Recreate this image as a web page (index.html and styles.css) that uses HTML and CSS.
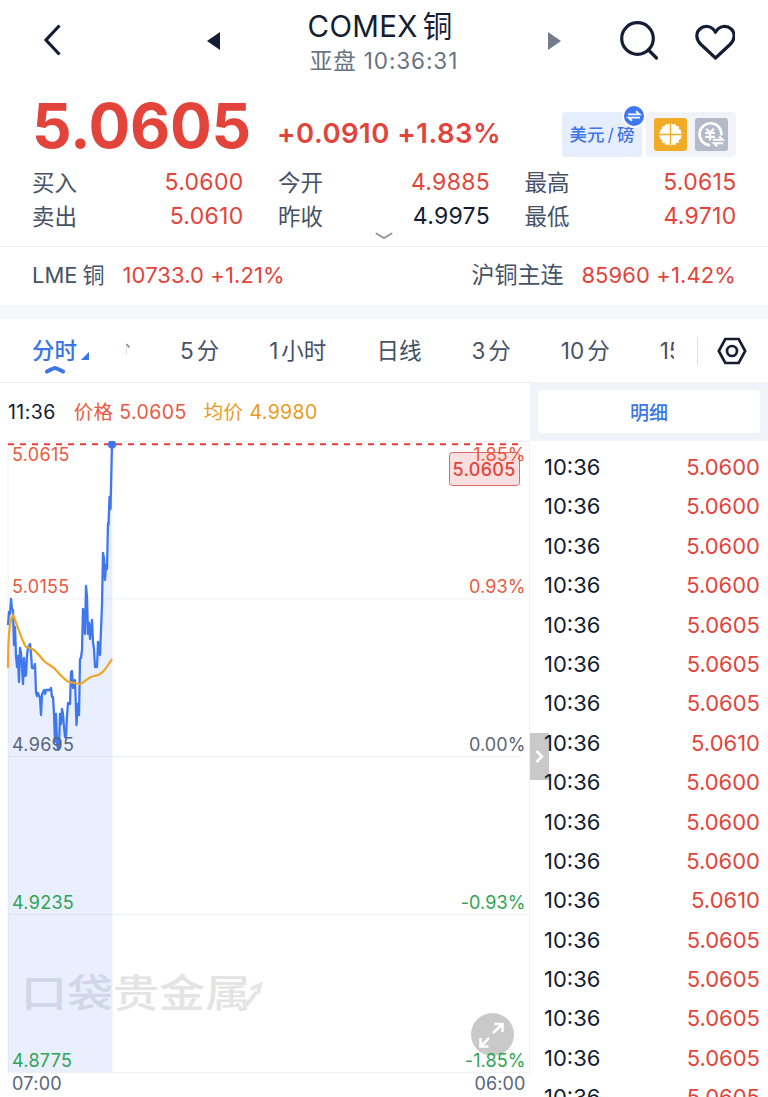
FILE: index.html
```
<!DOCTYPE html>
<html lang="zh-CN">
<head>
  <meta charset="UTF-8">
  <meta name="viewport" content="width=device-width, initial-scale=1.0">
  <title>COMEX铜</title>
  <link rel="stylesheet" href="styles.css">
</head>
<body>
  <header class="topbar">
    <svg class="back" width="20" height="36" viewBox="0 0 20 36"><path d="M17.500 2.500 4 17l13.500 14.500"/></svg>
    <svg class="prev" width="13" height="18" viewBox="0 0 13 18"><path d="M13 0v18L0 9z"/></svg>
    <div class="title">
      <h1>COMEX<span>铜</span></h1>
      <p>亚盘 10:36:31</p>
    </div>
    <svg class="next" width="13" height="18" viewBox="0 0 13 18"><path d="M0 0v18l13-9z"/></svg>
    <svg class="search" width="40" height="40" viewBox="0 0 40 40"><circle cx="18.500" cy="17.500" r="15.800"/><path d="m29.500 29 8 8"/></svg>
    <svg class="heart" width="40" height="36" viewBox="0 0 40 36"><path d="M20.500 34 6 20.500C.8 15.500.6 8.900 4.800 5 9.200 1 16.500 1.200 20.500 8.200 24.500 1.200 31.800 1 36.200 5c4.200 3.900 4 10.500-1.200 15.500z"/></svg>
  </header>

  <section class="quote">
    <div class="quote-main">
      <div class="price">5.0605</div>
      <div class="change">+0.0910 +1.83%</div>
      <div class="unit">
        美元<i>/</i>磅
        <svg class="unit-badge" width="24" height="24" viewBox="0 0 24 24"><circle cx="12" cy="12" r="11"/><path d="M6 10.300h11.500l-3.500-3M18 13.700H6.500l3.500 3"/></svg>
      </div>
      <div class="market">
        <svg width="33" height="33" viewBox="0 0 34 34">
          <rect width="34" height="34" rx="3" fill="#f0ac27"/>
          <path fill="#fff" d="M16.300 5.500v10.800H5.500l1-4 2-1-.3-2.500 3-.5.800-2 2.500.5zM17.700 5.500v10.800h10.800l-1-4-2-1 .3-2.500-3-.5-.8-2-2.500.5zM16.300 28.500V17.700H5.500l1 4 2 1-.3 2.500 3 .5.800 2 2.500-.5zM17.700 28.500V17.700h10.800l-1 4-2 1 .3 2.500-3 .5-.8 2-2.500-.5z"/>
        </svg>
        <svg width="33" height="33" viewBox="0 0 34 34">
          <rect width="34" height="34" rx="3" fill="#b4bac8"/>
          <g fill="none" stroke="#fff" stroke-width="2.700">
            <path d="M15.500 28A11.300 11.300 0 1 1 27.200 18"/>
            <path stroke-width="2.200" d="m11.500 11 4 4 4-4M15.500 15v8M10.500 15.500h10M10.500 19.500h10"/>
            <path stroke-width="2" d="M18.500 22.500h10l-3.500-3.500M29 26h-9.500l3.500 3"/>
          </g>
        </svg>
      </div>
    </div>
    <dl class="stats">
      <div><dt>买入</dt><dd>5.0600</dd></div>
      <div><dt>今开</dt><dd>4.9885</dd></div>
      <div><dt>最高</dt><dd>5.0615</dd></div>
      <div><dt>卖出</dt><dd>5.0610</dd></div>
      <div><dt>昨收</dt><dd class="flat">4.9975</dd></div>
      <div><dt>最低</dt><dd>4.9710</dd></div>
    </dl>
    <svg class="more" width="18" height="8" viewBox="0 0 18 8"><path d="m1.500 1.500 7.500 4.500 7.500-4.500"/></svg>
  </section>

  <section class="related">
    <div>LME<span class="cn">铜</span><b>10733.0 +1.21%</b></div>
    <div><span class="wide">沪铜主连</span><b>85960 +1.42%</b></div>
  </section>

  <nav class="tabs">
    <a class="tab active">分时
      <svg class="corner" width="8" height="8" viewBox="0 0 8 8"><path d="M8 0v8H0z"/></svg>
      <svg class="caret" width="20" height="8" viewBox="0 0 20 8"><path d="M2 5.500Q9 2 10 2t8 3.500"/></svg>
    </a>
    <div class="tab-scroll">
      <svg class="cut" width="4" height="12" viewBox="0 0 4 12"><path class="stem" d="M.5 2v9"/><path d="m.5 1 3 3.500"/></svg>
      <a class="tab">5<span>分</span></a>
      <a class="tab">1<span>小时</span></a>
      <a class="tab">日线</a>
      <a class="tab">3<span>分</span></a>
      <a class="tab">10<span>分</span></a>
      <a class="tab">15<span>分</span></a>
    </div>
    <svg class="settings" width="30" height="28" viewBox="0 0 30 28"><path d="M8.300 2h13.400L28.200 14l-6.500 12H8.300L1.800 14z"/><circle cx="15" cy="14" r="5"/></svg>
  </nav>

  <main class="board">
    <section class="chart">
      <div class="legend">
        <span class="time">11:36</span>
        <span class="now">价格 5.0605</span>
        <span class="avg">均价 4.9980</span>
      </div>
      <div class="plot">
        <div class="watermark">口袋贵金属</div>
        <svg width="530" height="656" viewBox="0 441 530 656">
          <path class="arrow" d="M244 1007q6-5 12-15M251 989l9-4-2 9"/>
          <path class="grid" d="M8 441.500h521.500v631H8zM8 599h514M8 756.500h514M8 914.500h521"/>
          <path class="area" d="M8 1072V625L9 612 11 599 13 609 14 645 15 627 16 656 18 658 20 682 21 650 23 683 25 676 27 666 28 648 30 645 31 652 32 668 34 668 35 664 37 696 39 693 41 714 43 690 49 691 51 688 53 698 55 740 57 714 58 750 61 711 63 708 65 737 68 703 70 704 72 671 74 690 76 680 77 726 79 714 81 658 83 609 85 633 86 586 88 634 90 625 92 620 94 653 96 667 98 642 100 654 102 605 103 553 106 580 108 523 109.500 497 110.500 509 112 444 112.500 444V1072z"/>
          <path class="line" d="M8 625 9 612 10 614 11 599 12 609 13 610 14 645 15 627 16 656 17 667 18 656 19 682 20 648 21 653 22 667 23 684 24 658 25 676 26 675 27 655 28 648 30 644 31 653 32 668 34 668 35 664 36 692 37 696 38 693 40 698 41 715 42 694 44 690 45 694 46 690 50 690 51 688 52 697 53 697 54 713 55 742 56 714 57 742 58 749 59 748 60 714 61 724 62 709 63 714 64 727 65 737 66 736 67 716 68 703 70 704 71 672 72 671 73 688 74 684 75 680 76.500 725 78 704 79 715 80 659 81 658 82 650 83 609 84 618 85 634 86 586 87 597 88 634 89 623 90 639 92 620 93 642 94 649 95 667 97 667 98 642 100 655 101 630 102 605 103 553 104 558 105 580 106 565 107 569 108 523 108.500 525 109.500 497 110.500 509 112 444"/>
          <path class="mean" d="M8 668C8 640 9 620 13 615 17 624 21 639 26 647 31 648 35 649 43 660 47 664 51 666 54 668 61 676 66 681 69 682L75 683 80 684C86 682 87 677 94 676 102 675 105 670 112 659"/>
          <path class="dash" d="M8 444.300h512"/>
          <circle class="dot" cx="112" cy="444.500" r="4.200"/>
          <g class="up"><text x="12" y="460.500">5.0615</text><text x="12" y="592.500">5.0155</text></g>
          <g><text x="12" y="750.500">4.9695</text></g>
          <g class="down"><text x="12" y="908.500">4.9235</text><text x="12" y="1066.500">4.8775</text></g>
          <text x="12" y="1089.500">07:00</text>
          <rect class="tag" x="449.500" y="452.500" width="70" height="33" rx="3"/>
          <text class="tag-text" x="452.500" y="475.500">5.0605</text>
          <circle class="expand" cx="492.500" cy="1034.500" r="21.500"/>
          <path class="expand-icon" d="m493 1033 9-8.500m-7.500-.5h8v8M489 1038l-8 8m-.5-8v8.500h8"/>
          <g class="right">
            <text class="up" x="525.500" y="460.500">1.85%</text>
            <text class="up" x="525.500" y="592.500">0.93%</text>
            <text x="525.500" y="750.500">0.00%</text>
            <text class="down" x="525.500" y="908.500">-0.93%</text>
            <text class="down" x="525.500" y="1066.500">-1.85%</text>
            <text x="525.500" y="1089.500">06:00</text>
          </g>
        </svg>
      </div>
    </section>

    <aside class="ticks">
      <div class="ticks-head"><button>明细</button></div>
      <div class="collapse"><svg width="9" height="13" viewBox="0 0 9 13"><path d="m1.500 1 5.500 5.500L1.500 12"/></svg></div>
      <ul>
        <li><span>10:36</span><b>5.0600</b></li>
        <li><span>10:36</span><b>5.0600</b></li>
        <li><span>10:36</span><b>5.0600</b></li>
        <li><span>10:36</span><b>5.0600</b></li>
        <li><span>10:36</span><b>5.0605</b></li>
        <li><span>10:36</span><b>5.0605</b></li>
        <li><span>10:36</span><b>5.0605</b></li>
        <li><span>10:36</span><b>5.0610</b></li>
        <li><span>10:36</span><b>5.0600</b></li>
        <li><span>10:36</span><b>5.0600</b></li>
        <li><span>10:36</span><b>5.0600</b></li>
        <li><span>10:36</span><b>5.0610</b></li>
        <li><span>10:36</span><b>5.0605</b></li>
        <li><span>10:36</span><b>5.0605</b></li>
        <li><span>10:36</span><b>5.0605</b></li>
        <li><span>10:36</span><b>5.0605</b></li>
        <li><span>10:36</span><b>5.0605</b></li>
      </ul>
    </aside>
  </main>
</body>
</html>
```
FILE: styles.css
```
:root {
  --ink: #141d33;
  --text: #465266;
  --red: #e2443b;
  --blue: #3b75e8;
  --line: #eeeff2;
  --panel: #f2f3f8;
}

* {
  margin: 0;
  padding: 0;
  box-sizing: border-box;
}
body {
  width: 768px;
  height: 1097px;
  overflow: hidden;
  background: #fff;
  color: var(--text);
  font-family: Inter, "Noto Sans CJK SC", sans-serif;
  font-size: 22px;
}
svg {
  display: block;
  flex: none;
}
b, i {
  font-weight: 400;
  font-style: normal;
}

/* header */
.topbar {
  height: 81px;
  display: flex;
  align-items: center;
  padding-left: 42px;
}
.back, .search, .heart {
  fill: none;
  stroke: var(--ink);
  stroke-width: 3.2;
}
.search {
  margin-left: 58px;
  stroke-linecap: round;
}
.heart {
  margin: 2px 0 0 36px;
  stroke-linejoin: round;
}
.prev {
  margin-left: 145px;
  fill: var(--ink);
}
.next {
  margin-left: 74px;
  fill: #747b89;
}
.title {
  width: 328px;
  margin: 5px -74px 0 0;
  text-align: center;
}
.title h1 {
  padding-right: 8px;
  font-size: 29.5px;
  font-weight: 400;
  line-height: 36px;
  letter-spacing: .3px;
  color: var(--ink);
}
.title h1 span {
  margin-left: 5px;
}
.title p {
  font-size: 22.5px;
  line-height: 34px;
  letter-spacing: .9px;
  color: #687484;
}

/* quote */
.quote {
  position: relative;
  height: 166px;
  padding: 0 32px;
  border-bottom: 1px solid var(--line);
}
.quote-main {
  height: 85px;
  display: flex;
  align-items: center;
}
.price {
  width: 245px;
  padding-top: 3px;
  font-size: 62px;
  font-weight: 700;
  letter-spacing: -.3px;
  color: var(--red);
}
.change {
  width: 285px;
  padding-top: 19px;
  font-size: 27.5px;
  font-weight: 600;
  letter-spacing: .5px;
  white-space: nowrap;
  color: var(--red);
}
.unit {
  position: relative;
  width: 80px;
  height: 45px;
  margin-top: 22px;
  border-radius: 4px;
  background: #e6edfc;
  color: var(--blue);
  font-size: 17.5px;
  font-weight: 500;
  line-height: 45px;
  text-align: center;
}
.unit i {
  margin: 0 3px;
}
.unit-badge {
  position: absolute;
  top: -8px;
  right: -4px;
}
.unit-badge circle {
  fill: #3d78f2;
  stroke: #fff;
  stroke-width: 2;
}
.unit-badge path {
  fill: none;
  stroke: #fff;
  stroke-width: 1.8;
}
.market {
  width: 90px;
  height: 45px;
  margin: 22px 0 0 4px;
  padding: 0 8px;
  border-radius: 4px;
  background: var(--panel);
  display: flex;
  align-items: center;
  justify-content: space-between;
}
.stats {
  display: grid;
  grid-template-columns: 211.5px 212px 212px;
  column-gap: 34.5px;
  line-height: 33.5px;
}
.stats div {
  display: flex;
  justify-content: space-between;
}
.stats dt {
  font-size: 22.5px;
}
.stats dd {
  color: var(--red);
  font-size: 23px;
  letter-spacing: .3px;
}
.stats .flat {
  color: var(--ink);
}
.more {
  position: absolute;
  left: 375px;
  bottom: 6px;
  fill: none;
  stroke: #9297a3;
  stroke-width: 2;
  stroke-linecap: round;
}

.related {
  height: 72px;
  padding: 0 32px;
  display: flex;
  justify-content: space-between;
  line-height: 57px;
  border-bottom: 14px solid #f5f6fa;
}
.related .cn {
  margin-left: 5px;
}
.related .wide {
  font-size: 23px;
}
.related b {
  margin-left: 18px;
  letter-spacing: .1px;
  color: var(--red);
}

/* period tabs */
.tabs {
  height: 64px;
  padding-left: 32px;
  display: flex;
  align-items: center;
  border-bottom: 1px solid #e9ebee;
}
.tab {
  flex: none;
  font-size: 22.5px;
  line-height: 32px;
}
.tab span {
  margin-left: 3px;
}
.tab.active {
  position: relative;
  width: 94px;
  color: var(--blue);
  font-weight: 500;
}
.corner {
  position: absolute;
  left: 49px;
  top: 17px;
  fill: var(--blue);
}
.caret {
  position: absolute;
  left: 13px;
  top: 31px;
  fill: none;
  stroke: var(--blue);
  stroke-width: 4;
  stroke-linecap: round;
}
.tab-scroll {
  width: 548px;
  overflow: hidden;
  display: flex;
  align-items: center;
  gap: 50px;
}
.cut {
  margin-top: -4px;
  fill: none;
  stroke: #7b8491;
  stroke-width: 1.5;
}
.cut .stem {
  stroke: #d9dce0;
  stroke-width: 1;
}
.settings {
  box-sizing: content-box;
  margin-left: 23px;
  padding-left: 19px;
  border-left: 1px solid #dfe1e5;
  fill: none;
  stroke: var(--ink);
  stroke-width: 2.7;
}

/* chart */
.board {
  display: flex;
  height: 714px;
}
.chart {
  width: 530px;
}
.legend {
  height: 58px;
  padding-left: 8px;
  display: flex;
  gap: 17px;
  font-size: 19.5px;
  line-height: 58px;
  letter-spacing: .4px;
}
.time {
  margin-right: 1px;
  color: var(--ink);
}
.now {
  color: #ea5940;
}
.avg {
  color: #ea9a20;
}
.plot {
  position: relative;
}
.watermark {
  position: absolute;
  left: 21px;
  top: 516px;
  font-family: "Noto Sans CJK SC", sans-serif;
  font-size: 46px;
  font-weight: 500;
  line-height: 66px;
  color: #e4e4e5;
  transform: scaleY(.85);
}
.plot svg {
  position: relative;
  fill: none;
}
.plot text {
  fill: #596579;
  font-size: 18px;
  letter-spacing: .3px;
}
.plot .up text, .plot .up {
  fill: #ea5940;
}
.plot .down text, .plot .down {
  fill: #2fa352;
}
.plot .right {
  text-anchor: end;
}
.plot .right text {
  letter-spacing: .1px;
}
.plot .arrow {
  stroke: #e6e6e6;
  stroke-width: 4;
}
.plot .grid {
  stroke: #f0f1f3;
}
.plot .area {
  fill: rgba(61, 110, 250, .115);
}
.plot .line {
  stroke: #3f78ee;
  stroke-width: 2.3;
  stroke-linejoin: round;
}
.plot .mean {
  stroke: #eea524;
  stroke-width: 2.2;
}
.plot .dash {
  stroke: #e83d38;
  stroke-width: 2;
  stroke-dasharray: 6 6;
}
.plot .dot {
  fill: #3f78ee;
}
.plot .tag {
  fill: #f9dfdf;
  stroke: #dc6866;
}
.plot .tag-text {
  fill: var(--red);
  font-weight: 500;
}
.plot .expand {
  fill: #c9c9c9;
}
.plot .expand-icon {
  stroke: #fff;
  stroke-width: 2.5;
}

/* tick list */
.ticks {
  position: relative;
  width: 238px;
}
.ticks-head {
  height: 59px;
  margin-top: -1px;
  padding: 8px 8px 7px;
  background: var(--panel);
}
.ticks-head button {
  width: 100%;
  height: 43px;
  border: 0;
  border-radius: 4px;
  background: #fff;
  color: var(--blue);
  font: 500 19px Inter, "Noto Sans CJK SC", sans-serif;
}
.collapse {
  position: absolute;
  left: 0;
  top: 350px;
  width: 19px;
  height: 47px;
  display: flex;
  align-items: center;
  justify-content: center;
  background: #c9c9c9;
}
.collapse path {
  fill: none;
  stroke: #fff;
  stroke-width: 2.5;
}
.ticks ul {
  position: relative;
  padding: 7px 8px 0 14px;
  list-style: none;
}
.ticks li {
  height: 39.4px;
  display: flex;
  justify-content: space-between;
  line-height: 39.4px;
}
.ticks li span {
  color: var(--ink);
}
.ticks li b {
  color: var(--red);
}
```
